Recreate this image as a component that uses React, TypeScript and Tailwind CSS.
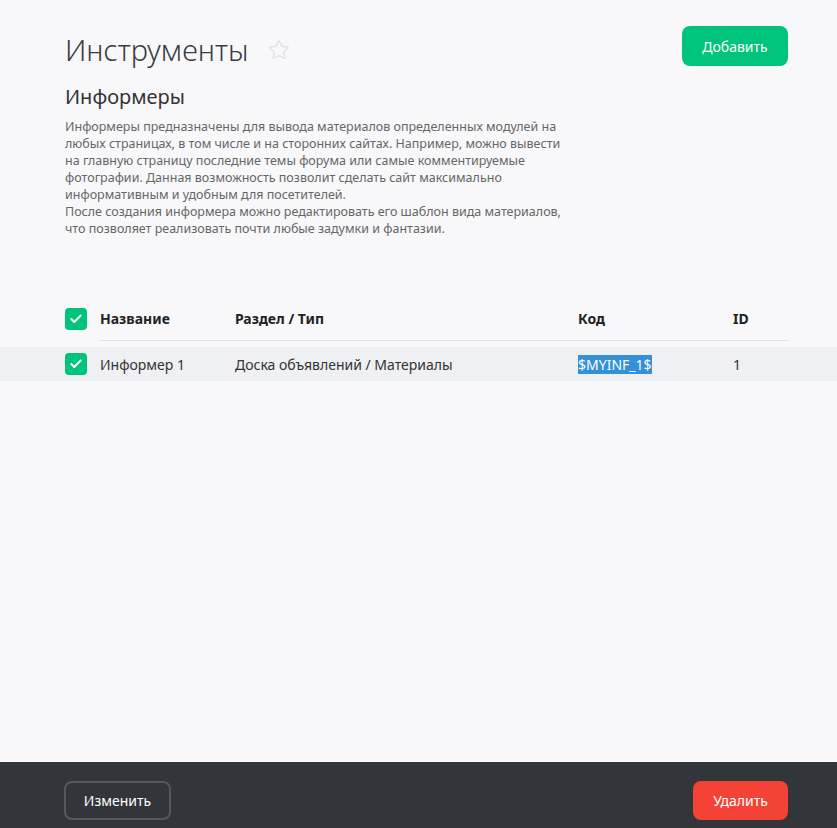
import { Check, Star } from "lucide-react";

const rows = [
  { name: "Информер 1", section: "Доска объявлений / Материалы", code: "$MYINF_1$", id: 1 },
];

function Box() {
  return (
    <div className="w-[22px] h-[22px] rounded-[4px] bg-[#00c47c] flex items-center justify-center">
      <Check className="w-[14px] h-[14px] text-white" strokeWidth={3.5} />
    </div>
  );
}

export default function App() {
  return (
    <div
      className="h-[828px] flex flex-col bg-[#f8f8fb] text-[#333]"
      style={{ fontFamily: '"Noto Sans", "Open Sans", sans-serif' }}
    >
      <main className="flex-1">
        <div className="pl-[65px] pr-[49px] pt-[26px]">
          <div className="flex items-start justify-between">
            <div className="flex items-center gap-[19px] pt-[6px]">
              <h1 className="text-[29px] font-light leading-[36px] text-[#3a3d42]">Инструменты</h1>
              <Star className="w-[22px] h-[22px] text-[#dfe1e6]" strokeWidth={1.5} />
            </div>
            <button className="h-10 w-[106px] rounded-lg bg-[#00c47c] text-white text-[14px]">
              Добавить
            </button>
          </div>
          <h2 className="mt-[16px] text-[20px] leading-[26px] text-[#333]">Информеры</h2>
          <p className="mt-[8px] w-[505px] text-[12.5px] leading-[17px] text-[#666]">
            Информеры предназначены для вывода материалов определенных модулей на любых страницах, в том числе и на сторонних сайтах. Например, можно вывести на главную страницу последние темы форума или самые комментируемые фотографии. Данная возможность позволит сделать сайт максимально информативным и удобным для посетителей.
            <br />
            После создания информера можно редактировать его шаблон вида материалов, что позволяет реализовать почти любые задумки и фантазии.
          </p>
        </div>

        <div className="mt-[60px]">
          <div className="pl-[65px] pr-[49px]">
            <div className="flex items-center h-[44px] text-[14px] font-bold text-[#222]">
              <div className="w-[35px]"><Box /></div>
              <div className="flex flex-1 items-center h-full border-b border-[#dfe1e4]">
                <div className="w-[135px]">Название</div>
                <div className="w-[343px]">Раздел / Тип</div>
                <div className="w-[155px]">Код</div>
                <div>ID</div>
              </div>
            </div>
          </div>
          <div className="mt-[6px]">
            {rows.map((r) => (
              <div key={r.id} className="bg-[#eef0f3] h-[34px] flex items-center pl-[65px] pr-[49px] text-[14px] text-[#333]">
                <div className="w-[35px]"><Box /></div>
                <div className="w-[135px]">{r.name}</div>
                <div className="w-[343px]">{r.section}</div>
                <div className="w-[155px]">
                  <span className="bg-[#3390d9] text-white">{r.code}</span>
                </div>
                <div>{r.id}</div>
              </div>
            ))}
          </div>
        </div>
      </main>

      <footer className="h-[66px] bg-[#32353a] flex items-start justify-between pl-[64px] pr-[49px] pt-[19px]">
        <button className="h-[39px] w-[107px] rounded-lg border-2 border-[#55585d] text-white text-[14px]">
          Изменить
        </button>
        <button className="h-[39px] w-[95px] rounded-lg bg-[#f44336] text-white text-[14px]">
          Удалить
        </button>
      </footer>
    </div>
  );
}
